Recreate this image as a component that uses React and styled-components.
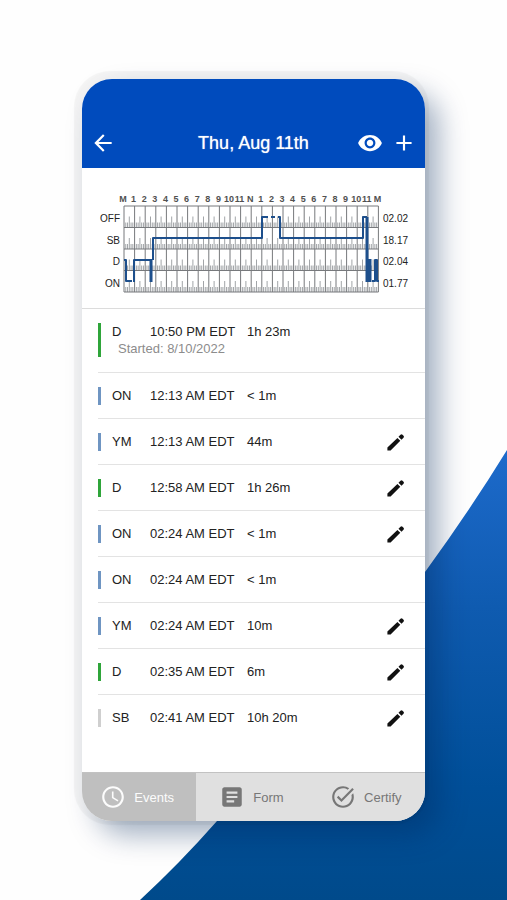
import styled, { createGlobalStyle } from "styled-components";
import {
  MdArrowBack,
  MdAdd,
  MdVisibility,
  MdArticle,
  MdOutlineAccessTime,
  MdTaskAlt,
} from "react-icons/md";

const statusColors = {
  D: "#2fa53a",
  ON: "#6f95c2",
  YM: "#6f95c2",
  SB: "#cfcfcf",
};

const events = [
  { status: "D", time: "10:50 PM EDT", length: "1h 23m", started: "8/10/2022" },
  { status: "ON", time: "12:13 AM EDT", length: "< 1m" },
  { status: "YM", time: "12:13 AM EDT", length: "44m", editable: true },
  { status: "D", time: "12:58 AM EDT", length: "1h 26m", editable: true },
  { status: "ON", time: "02:24 AM EDT", length: "< 1m", editable: true },
  { status: "ON", time: "02:24 AM EDT", length: "< 1m" },
  { status: "YM", time: "02:24 AM EDT", length: "10m", editable: true },
  { status: "D", time: "02:35 AM EDT", length: "6m", editable: true },
  { status: "SB", time: "02:41 AM EDT", length: "10h 20m", editable: true },
];

const tabs = [
  { name: "Events", Icon: MdOutlineAccessTime, active: true },
  { name: "Form", Icon: MdArticle },
  { name: "Certify", Icon: MdTaskAlt },
];

const totals = [
  { status: "OFF", hours: "02.02" },
  { status: "SB", hours: "18.17" },
  { status: "D", hours: "02.04" },
  { status: "ON", hours: "01.77" },
];

const hours = "M 1 2 3 4 5 6 7 8 9 10 11 N 1 2 3 4 5 6 7 8 9 10 11 M".split(" ");

const HOUR = 10.6;
const LANE = 21.5;
const LEFT = 42;
const TOP = 14;

const range = (count) => Array.from({ length: count }, (_, i) => i);

const DutyChart = () => {
  const right = LEFT + HOUR * 24;
  const bottom = TOP + LANE * 4;
  let ticks = "";
  range(4).forEach((lane) => {
    const base = TOP + LANE * (lane + 1);
    range(24).forEach((hour) => {
      [5, 5, 11, 5, 5].forEach((height, i) => {
        const x = LEFT + HOUR * (hour + (i + 1) / 6);
        ticks += `M${x} ${base}v-${height}`;
      });
    });
  });

  return (
    <Chart viewBox="0 0 343 140" role="img" aria-label="Duty status by hour">
      <g transform="translate(0 24)">
        {hours.map((hour, i) => (
          <HourLabel key={i} x={LEFT - 1 + HOUR * i} y="10">
            {hour}
          </HourLabel>
        ))}
        <path d={ticks} stroke="#a2a5a8" strokeWidth="1" />
        <path
          d={
            range(25)
              .map((i) => `M${LEFT + HOUR * i} ${TOP}V${bottom}`)
              .join("") +
            range(5)
              .map((i) => `M${LEFT} ${TOP + LANE * i}H${right}`)
              .join("")
          }
          stroke="#77797c"
          strokeWidth="1"
        />
        {totals.map(({ status, hours }, i) => (
          <g key={status}>
            <LaneLabel x="38" y={30 + LANE * i} textAnchor="end">
              {status}
            </LaneLabel>
            <LaneLabel x="301" y={30 + LANE * i}>
              {hours}
            </LaneLabel>
          </g>
        ))}
        <g fill="none" stroke="#1d4f8c" strokeWidth="2" strokeLinejoin="round">
          <path d="M42 68h2v21h6M52 90V68h17M71 68V46H180V25h6M189 25h4M196 25h2v21H281V25h4M290 89h3V68h2v21h2" />
          <path d="M69 67v23M285 25v65M288 67v23" strokeWidth="3" />
        </g>
      </g>
    </Chart>
  );
};

const PencilIcon = () => (
  <svg viewBox="0 0 18 18" width="18" height="18">
    <path d="M.4 17.600v-3.200L10.400 4.900l2.900 2.900L3.600 17.600zM11.500 3.800l2-2q1-1 2 0l1 1q1 1 0 2l-2 2z" />
  </svg>
);

const App = () => (
  <>
    <GlobalStyle />
    <Page>
      <Backdrop viewBox="0 0 507 900" preserveAspectRatio="none" aria-hidden="true">
        <defs>
          <linearGradient id="blue" x1="0" y1="0" x2="0" y2="1">
            <stop offset="0" stopColor="#1d6acb" />
            <stop offset="0.35" stopColor="#0f5bb0" />
            <stop offset="0.75" stopColor="#004f99" />
            <stop offset="1" stopColor="#004a8b" />
          </linearGradient>
        </defs>
        <path d="M507 450Q397 629 217 821Q180 863 140 900H507Z" fill="url(#blue)" />
      </Backdrop>
      <Phone>
        <Header>
          <IconButton aria-label="Back">
            <MdArrowBack />
          </IconButton>
          <Title>Thu, Aug 11th</Title>
          <Actions>
            <IconButton aria-label="View">
              <MdVisibility />
            </IconButton>
            <IconButton aria-label="Add">
              <MdAdd />
            </IconButton>
          </Actions>
        </Header>
        <DutyChart />
        <EventList>
          {events.map((event, i) => (
            <EventRow key={i}>
              <Bar $color={statusColors[event.status]} $tall={event.started} />
              <Details>
                <Line>
                  <span>{event.status}</span>
                  <span>{event.time}</span>
                  <span>{event.length}</span>
                </Line>
                {event.started && <Started>Started: {event.started}</Started>}
              </Details>
              {event.editable && (
                <EditButton aria-label={`Edit ${event.status} ${event.time}`}>
                  <PencilIcon />
                </EditButton>
              )}
            </EventRow>
          ))}
        </EventList>
        <TabBar>
          {tabs.map(({ name, Icon, active }) => (
            <Tab key={name} $active={active}>
              <Icon />
              {name}
            </Tab>
          ))}
        </TabBar>
      </Phone>
    </Page>
  </>
);

const GlobalStyle = createGlobalStyle`
  * {
    box-sizing: border-box;
  }
  body {
    margin: 0;
    background: #fefefe;
    font-family: "Liberation Sans", Arial, sans-serif;
  }
  button {
    border: 0;
    padding: 0;
    background: none;
    font: inherit;
    color: inherit;
    cursor: pointer;
  }
`;

const Page = styled.main`
  position: relative;
  min-height: 100vh;
  padding: 79px 82px;
  overflow: hidden;
`;

const Backdrop = styled.svg`
  position: absolute;
  inset: 0;
  width: 100%;
  height: 100%;
`;

const Phone = styled.div`
  position: relative;
  display: flex;
  flex-direction: column;
  min-height: calc(100vh - 158px);
  border-radius: 30px;
  background: white;
  overflow: hidden;
  box-shadow: -2px -2px 1px 6px rgba(0, 0, 0, 0.04),
    14px 14px 28px rgba(0, 38, 90, 0.36);
`;

const Header = styled.header`
  display: grid;
  grid-template-columns: 1fr auto 1fr;
  align-items: center;
  padding: 51px 8px 12px;
  background: #004bbd;
  color: white;
`;

const Title = styled.h1`
  margin: 0;
  font-size: 18px;
  font-weight: 400;
  line-height: 26px;
  text-shadow: 0 0 1px rgba(255, 255, 255, 0.8);
`;

const Actions = styled.div`
  display: flex;
  justify-content: flex-end;
  gap: 8px;
`;

const IconButton = styled.button`
  width: 26px;
  height: 26px;
  font-size: 26px;
  line-height: 0;
`;

const Chart = styled.svg`
  display: block;
  width: 100%;
  border-bottom: 1px solid #dcdcdc;
`;

const HourLabel = styled.text`
  font-size: 9px;
  font-weight: 700;
  fill: #505050;
  text-anchor: middle;
`;

const LaneLabel = styled.text`
  font-size: 10px;
  fill: #222;
`;

const EventList = styled.ul`
  flex: 1;
  margin: 0;
  padding: 0 0 0 16px;
  list-style: none;
`;

const EventRow = styled.li`
  display: flex;
  align-items: center;
  min-height: 46px;
  padding-right: 20px;
  & + & {
    border-top: 1px solid #e3e3e3;
  }
  &:first-child {
    min-height: 63px;
    padding-bottom: 2px;
  }
`;

const Bar = styled.div`
  width: 3px;
  height: ${({ $tall }) => ($tall ? 34 : 18)}px;
  background: ${({ $color }) => $color};
`;

const Details = styled.div`
  flex: 1;
  padding-left: 11px;
`;

const Line = styled.div`
  display: grid;
  grid-template-columns: 38px 97px 1fr;
  font-size: 13px;
  line-height: 18px;
  color: #222;
`;

const Started = styled.div`
  padding-left: 6px;
  font-size: 13px;
  line-height: 16px;
  color: #8c8c8c;
`;

const EditButton = styled.button`
  height: 18px;
  line-height: 0;
  fill: #111;
`;

const TabBar = styled.nav`
  display: grid;
  grid-template-columns: repeat(3, 1fr);
  height: 49px;
  border-top: 1px solid #c2c2c2;
  background: #e0e0e0;
`;

const Tab = styled.button`
  display: flex;
  align-items: center;
  justify-content: center;
  gap: 8px;
  padding-right: 4px;
  font-size: 13px;
  color: #777;
  ${({ $active }) => $active && "background: #bfbfbf; color: #fcfcfc;"}
  svg {
    width: 26px;
    height: 26px;
  }
`;

export default App;
